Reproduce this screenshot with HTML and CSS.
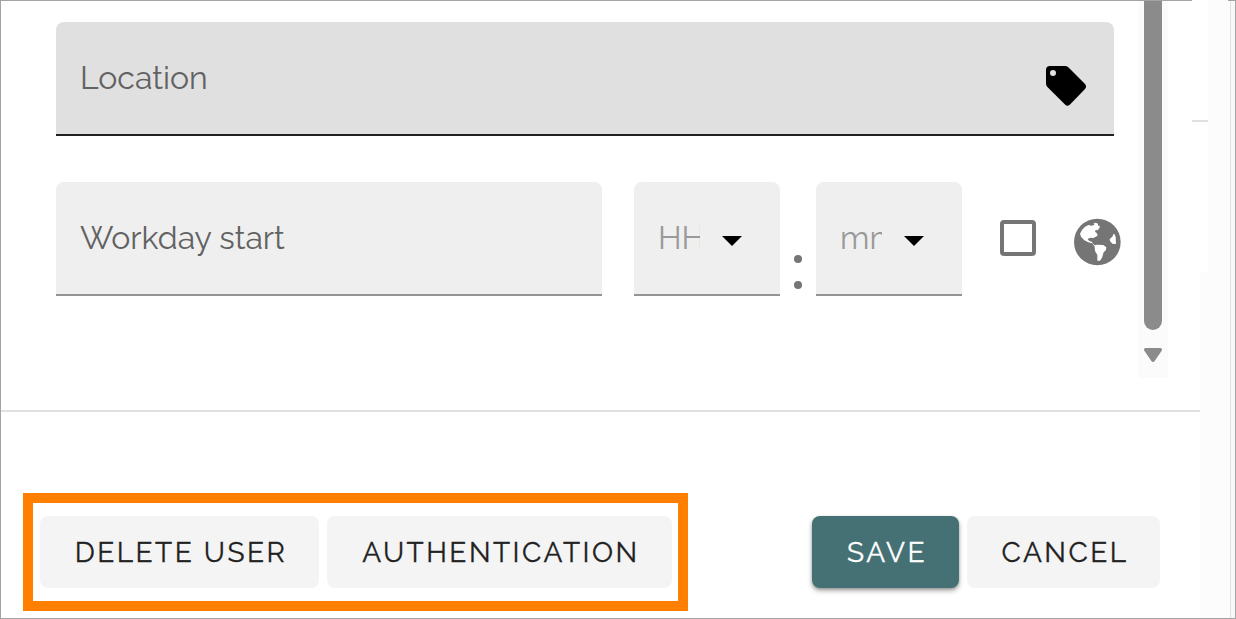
FILE: index.html
```html
<!DOCTYPE html>
<html lang="en">
<head>
<meta charset="utf-8">
<title>Edit user</title>
<link rel="stylesheet" href="styles.css">
</head>
<body>
<div class="frame">
  <main class="dialog">
    <section class="content">
      <div class="form">
        <div class="field location">
          <span class="label">Location</span>
          <svg class="tag" viewBox="0 0 42 42"><path fill-rule="evenodd" d="M5 1H20Q22 1 23.300 2.300L40 19Q42.200 21.700 40 24L25 39.500Q22.500 42 20 39.500L2.400 22Q1 20.500 1 18.500V5Q1 1 5 1ZM8 5A3 3 0 1 0 8 11A3 3 0 1 0 8 5Z"/></svg>
        </div>
        <div class="row">
          <div class="field workday"><span class="label">Workday start</span></div>
          <div class="field time">
            <span class="label hint">HH</span>
            <svg class="caret" viewBox="0 0 20 10"><path d="M0 0H20L10 10Z"/></svg>
          </div>
          <div class="colon"><i></i><i></i></div>
          <div class="field time">
            <span class="label hint">mm</span>
            <svg class="caret" viewBox="0 0 20 10"><path d="M0 0H20L10 10Z"/></svg>
          </div>
          <span class="checkbox"></span>
          <svg class="globe" viewBox="0 0 144 144"><circle cx="73" cy="72" r="70" fill="#757575"/><path fill="#fff" d="M21 47L27 36L35 27L46 21L57 23L64 20L62 16L68 14L75 17L75 23L80 23L80 29L74 37L68 36L66 41L72 46L74 53L67 57L61 60L54 59L47 61L44 65L50 69L56 71L61 78L65 82L72 80L91 81L100 88L99 96L92 103L87 119L81 128L73 128L73 111L66 99L65 86L58 76L46 73L34 67L24 56Z"/><path fill="#fff" d="M124 48L128 56L129 78L118 77L111 69L110 63L118 56L121 49Z"/></svg>
        </div>
      </div>
      <div class="scrollbar">
        <div class="thumb"></div>
        <svg class="down" viewBox="0 0 18 14"><path d="M1.500 0H16.500Q19 1 17.500 3L11 12.500Q9 15.500 7 12.500L.5 3Q-1 1 1.500 0Z"/></svg>
      </div>
    </section>
    <footer class="actions">
      <div class="highlight">
        <button class="btn delete">DELETE USER</button>
        <button class="btn auth">AUTHENTICATION</button>
      </div>
      <div class="confirm">
        <button class="btn save">SAVE</button>
        <button class="btn cancel">CANCEL</button>
      </div>
    </footer>
  </main>
  <aside class="edge"></aside>
  <div class="panel"></div>
</div>
</body>
</html>
```
FILE: styles.css
```css
* { box-sizing: border-box; }
body { margin: 0; background: #fff; font-family: Raleway, Lato, sans-serif; }
.frame { position: relative; width: 1236px; height: 619px; border: 1px solid #a3a3a3; display: flex; background: #f8f8f8; }
.dialog { width: 1199px; height: 617px; background: #fff; }
.content { height: 411px; display: flex; border-bottom: 2px solid #e0e0e0; }
.form { width: 1137px; padding: 21px 0 0 55px; }
.field { height: 114px; border-radius: 8px 8px 0 0; background: linear-gradient(#949494, #949494) 0 100% / 100% 2px no-repeat #efefef; display: flex; align-items: center; padding: 0 0 2px 24px; }
.location { width: 1058px; background: linear-gradient(#212121, #212121) 0 100% / 100% 2px no-repeat #e0e0e0; justify-content: space-between; padding-right: 27px; }
.label { font-size: 32px; line-height: 40px; font-weight: 400; color: #626262; white-space: nowrap; }
.tag { width: 42px; height: 42px; margin-top: 16px; }
.row { margin-top: 46px; display: flex; }
.workday { width: 546px; margin-right: 32px; }
.time { width: 146px; }
.hint { width: 42px; overflow: hidden; color: #999; }
.caret { width: 20px; height: 10px; margin: 5px 0 0 22px; }
.colon { width: 36px; padding: 73px 0 0 14px; display: flex; flex-direction: column; gap: 18px; }
.colon i { width: 8px; height: 8px; border-radius: 50%; background: #757575; }
.checkbox { width: 36px; height: 36px; border: 4px solid #757575; border-radius: 4px; margin: 38px 37px 0 38px; }
.globe { width: 48px; height: 48px; margin-top: 36px; flex: none; }
.scrollbar { width: 30px; height: 377px; background: #fbfbfb; display: flex; flex-direction: column; align-items: center; }
.thumb { width: 18px; height: 329px; background: #8b8b8b; border-radius: 0 0 9px 9px; }
.down { width: 18px; height: 14px; margin-top: 18px; fill: #8b8b8b; }
.actions { height: 206px; padding: 81px 40px 0 22px; display: flex; justify-content: space-between; }
.highlight { width: 665px; height: 118px; border: 10px solid #ff8000; padding: 13px 6px 0 7px; display: flex; gap: 8px; }
.confirm { display: flex; gap: 8px; padding-top: 23px; }
.btn { height: 72px; border: 0; border-radius: 8px; padding: 2px 0 0 3px; background: #f4f4f4; color: #212121; font: 400 28px/36px Raleway, Lato, sans-serif; letter-spacing: 2.5px; white-space: nowrap; -webkit-text-stroke: .3px currentColor; }
.delete { width: 279px; }
.auth { width: 345px; }
.save { width: 147px; background: #457175; color: #fff; box-shadow: 0 3px 5px rgba(0,0,0,.3), 0 1px 3px rgba(0,0,0,.2); }
.cancel { width: 193px; }
.edge { width: 31px; height: 617px; background: #fcfcfc; border-right: 1px solid #e2e2e2; }
.panel { position: absolute; left: 1191px; top: -1px; width: 36px; height: 272px; background: linear-gradient(#e0e0e0, #e0e0e0) 0 120px / 16px 2px no-repeat, linear-gradient(#fff, #fff) 0 0 / 16px 100% no-repeat, #fcfcfc; }
```
